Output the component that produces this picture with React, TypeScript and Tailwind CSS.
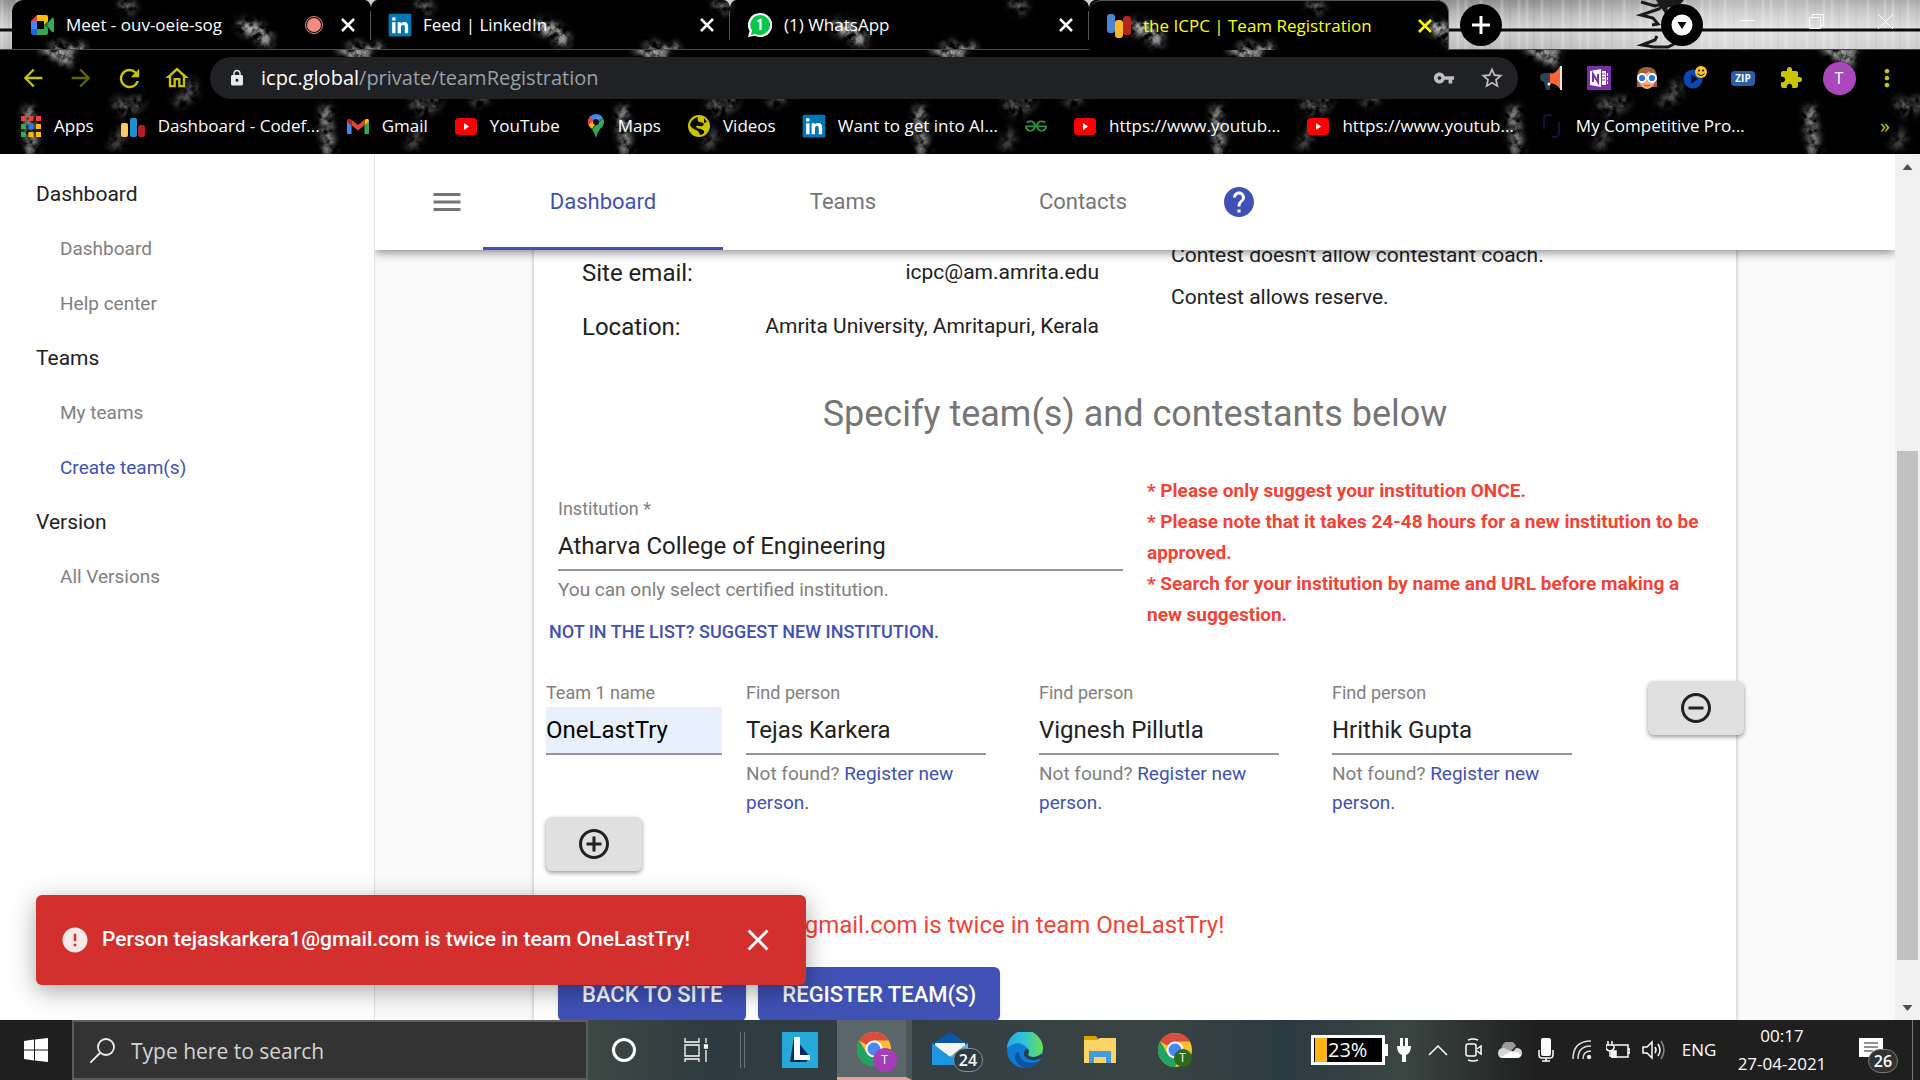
import { useState } from "react";
import type { ReactNode } from "react";
import {
  MdAddCircleOutline,
  MdArrowBack,
  MdArrowForward,
  MdClose,
  MdError,
  MdExtension,
  MdHelp,
  MdLock,
  MdMenu,
  MdMoreVert,
  MdOutlineHome,
  MdRefresh,
  MdRemoveCircleOutline,
  MdStarOutline,
  MdVpnKey,
} from "react-icons/md";
import { FaLinkedin } from "react-icons/fa";
import { SiGeeksforgeeks } from "react-icons/si";

const UI_FONT = "font-['Open_Sans','Noto_Sans',sans-serif]";

/* ---------- Brand icons ---------- */

function MeetIcon() {
  return (
    <svg viewBox="0 0 24 24" className="size-6 shrink-0">
      <path d="M1 8 7 2v6z" fill="#ea4335" />
      <path d="M1 8h6v8H1z" fill="#4285f4" />
      <path d="M1 16h6v6H3q-2 0-2-2z" fill="#1967d2" />
      <path d="M7 2h9q2 0 2 2v5l-4 3V8H7z" fill="#fbbc04" />
      <path d="M7 16h7v-4l4 3v5q0 2-2 2H7z" fill="#34a853" />
      <path d="m16 12 6-7q2-1 2 1v12q0 2-2 1z" fill="#34a853" />
      <path d="m14 12 4-4v8z" fill="#188038" />
    </svg>
  );
}

function LinkedInIcon() {
  return (
    <span className="flex size-[22px] shrink-0 items-center justify-center bg-white">
      <FaLinkedin className="size-[26px] shrink-0 text-[#0077b5]" />
    </span>
  );
}

function WhatsAppIcon() {
  return (
    <svg viewBox="0 0 24 24" className="size-6 shrink-0">
      <path d="M12 0a12 12 0 1 1-5 22.800L0 24l1.600-6A12 12 0 0 1 12 0z" fill="#fff" />
      <path d="M12 2a10 10 0 1 1-4.500 18.900L3 22l1-4.500A10 10 0 0 1 12 2z" fill="#09c64a" />
      <path d="m9.500 8.500 3-1.500v10" fill="none" stroke="#fff" strokeWidth="2.200" />
    </svg>
  );
}

function IcpcIcon() {
  return (
    <svg viewBox="0 0 24 24" className="size-6 shrink-0">
      <rect x="0" y="0" width="8" height="19" rx="3" fill="#4a86cf" />
      <rect x="8" y="6" width="8" height="18" rx="3" fill="#fdb827" />
      <rect x="16" y="2" width="8" height="19" rx="3" fill="#b3261a" />
    </svg>
  );
}

function AppsIcon() {
  const colors = ["#ea4335", "#ea4335", "#ea4335", "#34a853", "#2b7de9", "#fbbc04", "#34a853", "#fbbc04", "#fbbc04"];
  return (
    <svg viewBox="0 0 20 21" className="h-[21px] w-5 shrink-0">
      {colors.map((c, i) => (
        <rect key={i} x={(i % 3) * 7.5} y={Math.floor(i / 3) * 8} width="5" height="5" fill={c} />
      ))}
    </svg>
  );
}

function CodeforcesIcon() {
  return (
    <svg viewBox="0 0 24 24" className="size-6 shrink-0">
      <rect x="0" y="9" width="7" height="14" rx="2" fill="#f4cd5f" />
      <rect x="9" y="4" width="7" height="19" rx="2" fill="#1f8fce" />
      <rect x="17" y="11" width="7" height="12" rx="2" fill="#b61c27" />
    </svg>
  );
}

function GmailIcon() {
  return (
    <svg viewBox="0 0 24 18" className="w-[22px] shrink-0">
      <path d="M0 3v14q0 1 1 1h4V8z" fill="#4285f4" />
      <path d="M24 3v14q0 1-1 1h-4V8z" fill="#34a853" />
      <path d="M19 2v6l5-4q0-4-3-3z" fill="#fbbc04" />
      <path d="M0 4q0-4 3-3l2 1v6z" fill="#c5221f" />
      <path d="M5 8V2l7 5.500L19 2v6l-7 5.500z" fill="#ea4335" />
    </svg>
  );
}

function YouTubeIcon() {
  return (
    <svg viewBox="0 0 22 17" className="w-[22px] shrink-0">
      <rect width="22" height="17" rx="4" fill="#f00" />
      <path d="m9 5 5 3.500L9 12z" fill="#fff" />
    </svg>
  );
}

function MapsIcon() {
  return (
    <svg viewBox="0 0 16 24" className="h-6 w-[18px] shrink-0">
      <path d="M8 0a8 8 0 0 1 7 4L4 14Q0 11 0 8a8 8 0 0 1 8-8z" fill="#4285f4" />
      <path d="M2 2.500 6 6 0.500 11Q-1 6 2 2.500z" fill="#ea4335" />
      <path d="M0.500 11 11 3l-7 12q-2.500-2-3.500-4z" fill="#fbbc04" />
      <path d="M15 4q3 6-3 11-3 4-4 9-1-4-4-9z" fill="#34a853" />
      <circle cx="8" cy="8" r="3" fill="#111" />
    </svg>
  );
}

function GlobeIcon() {
  return (
    <svg viewBox="0 0 22 22" className="size-[22px] shrink-0">
      <circle cx="11" cy="11" r="11" fill="#c9c400" />
      <path
        d="M2 10Q3 4 10 2q-1 4 1 5 4 0 5 2-1 3-5 2-3-1-3 1 2 2 5 2 4 1 3 4-2 2-4 2-1-4-4-5-5-2-6-5z"
        fill="#0b0b00"
      />
      <path d="m16 3 3 4-3 1z" fill="#0b0b00" />
    </svg>
  );
}

function BracketIcon() {
  return (
    <svg viewBox="0 0 22 24" className="h-6 w-[22px] shrink-0" fill="none" stroke="#15153c" strokeWidth="2">
      <path d="M11 1H7Q3 1 3 5v10M11 23h3q4 0 4-4V8" />
    </svg>
  );
}

function ChromeIcon({ badge }: { badge: string }) {
  return (
    <span className="relative">
      <svg viewBox="0 0 34 34" className="size-[34px]">
        <circle cx="17" cy="17" r="17" fill="#fbc02d" />
        <path d="M2.300 8.500A17 17 0 0 1 31.700 8.500H17l-8 4z" fill="#dd4b3e" />
        <path d="M2.300 8.500A17 17 0 0 0 17 34l7-13-7 4-8-5z" fill="#1fa463" />
        <circle cx="17" cy="17" r="8.500" fill="#fff" />
        <circle cx="17" cy="17" r="6.500" fill="#4a87ee" />
      </svg>
      <span
        className={`absolute left-4 top-4 flex items-center justify-center rounded-full text-xs text-white ${badge}`}
      >
        T
      </span>
    </span>
  );
}

/* ---------- Browser chrome ---------- */

// Black marble tile, repeated every 297px across the window frame
function MarbleBackdrop({ id }: { id: string }) {
  return (
    <svg className="absolute inset-0 h-full w-full" aria-hidden="true">
      <defs>
        <filter
          id={`${id}-smoke`}
          filterUnits="userSpaceOnUse"
          x="0"
          y="0"
          width="297"
          height="154"
          colorInterpolationFilters="sRGB"
        >
          <feTurbulence type="fractalNoise" baseFrequency="0.12" numOctaves="5" seed="4" />
          <feColorMatrix values="0 0 0 0 1  0 0 0 0 1  0 0 0 0 1  3 0 0 0 -0.900" result="noise" />
          <feGaussianBlur in="SourceGraphic" stdDeviation="4" result="soft" />
          <feComposite in="noise" in2="soft" operator="in" />
        </filter>
        <pattern id={`${id}-marble`} width="297" height="154" patternUnits="userSpaceOnUse">
          <rect width="297" height="154" fill="#000" />
          <g filter={`url(#${id}-smoke)`} fill="none" stroke="#fff" strokeLinecap="round">
            <path d="m44 46 12 7 12 8M54 53l16-4" strokeWidth="8" opacity=".9" />
            <path d="m232 26 14 5 8 9" strokeWidth="12" opacity=".8" />
            <path d="m112 2 6 6" strokeWidth="11" opacity=".5" />
            <path d="m118 104 8 6 12-8" strokeWidth="11" opacity=".45" />
            <path d="m192 84 0 10-14 8" strokeWidth="8" opacity=".45" />
            <path d="M29 110v14l3 28" strokeWidth="9" opacity=".75" />
            <path d="m118 132 2 10-8 4" strokeWidth="7" opacity=".4" />
          </g>
        </pattern>
      </defs>
      <rect width="100%" height="100%" fill={`url(#${id}-marble)`} />
    </svg>
  );
}

function MetalBackdrop() {
  return (
    <svg className="absolute inset-x-0 top-0 h-[50px] w-full" aria-hidden="true">
      <defs>
        <linearGradient id="steel" x1="0" y1="0" x2="0" y2="1">
          <stop offset="0" stopColor="#8e8e8e" />
          <stop offset=".25" stopColor="#b4b4b4" />
          <stop offset=".55" stopColor="#d2d2d2" />
          <stop offset="1" stopColor="#bcbcbc" />
        </linearGradient>
        <pattern id="brush" width="61" height="50" patternUnits="userSpaceOnUse">
          <path d="M2 0v50M17 0v50M38 0v50M55 0v50" stroke="#fff" strokeWidth="3" opacity=".2" />
          <path d="M9 0v50M26 0v50M46 0v50" stroke="#666" strokeWidth="2" opacity=".1" />
        </pattern>
        <linearGradient id="glare">
          <stop offset="0" stopColor="#fff" stopOpacity="0" />
          <stop offset=".8" stopColor="#fff" stopOpacity="0" />
          <stop offset=".9" stopColor="#fff" stopOpacity=".4" />
          <stop offset="1" stopColor="#fff" stopOpacity=".25" />
        </linearGradient>
      </defs>
      <rect width="100%" height="50" fill="url(#steel)" />
      <rect width="100%" height="50" fill="url(#brush)" />
      <rect width="100%" height="50" fill="url(#glare)" />
      <path d="M0 30h4000" stroke="#0a0a0a" strokeWidth="3" />
      <path
        d="m1641 2 14 4 10-3-6 6-18 6 12 3 5 6-6 1M1657 36l-2 4-13 5 12 2 14 0 8-4"
        fill="none"
        stroke="#1a1a1a"
        strokeWidth="3"
      />
      <path d="m1656 0h28l-8 9-8-2-2 8z" fill="#1a1a1a" />
      <path d="M0 49.500h4000" stroke="#444" />
    </svg>
  );
}

type BrowserTabProps = {
  icon: ReactNode;
  title: string;
  active?: boolean;
  recording?: boolean;
};

function BrowserTab({ icon, title, active, recording }: BrowserTabProps) {
  return (
    <div
      className={`relative flex h-[50px] w-[359px] items-center pl-[18px] pr-4 ${
        active
          ? "rounded-t-xl border-t border-[#555] text-[#ffff00]"
          : "border-b border-[#4a4a4a] text-white"
      }`}
    >
      {icon}
      <span className="ml-3 flex-1 truncate">{title}</span>
      {recording && (
        <span className="mr-[18px] flex size-[18px] items-center justify-center rounded-full border border-[#f28b82]">
          <span className="size-[14px] rounded-full bg-[#f28b82]" />
        </span>
      )}
      <button type="button" aria-label={`Close ${title}`}>
        <svg viewBox="0 0 14 14" className="size-[14px]" stroke="currentColor" strokeWidth="2.500">
          <path d="m1 1 12 12M13 1 1 13" />
        </svg>
      </button>
      {!active && (
        <>
          <span className="absolute right-0 top-[11px] h-[29px] w-px bg-[#555]" />
          <svg viewBox="0 0 12 7" className="absolute -right-1.5 top-0 z-10 h-[7px] w-3">
            <path d="M0 0h12Q7 1 6 7 5 1 0 0z" fill="#d0d0d0" />
          </svg>
        </>
      )}
    </div>
  );
}

function TabStrip() {
  return (
    <div className="relative flex h-[50px] overflow-hidden pl-3 text-[17px]">
      <MetalBackdrop />
      <div className="relative flex overflow-hidden rounded-t-xl border-r border-[#555]">
        <MarbleBackdrop id="tabs" />
        <BrowserTab icon={<MeetIcon />} title="Meet - ouv-oeie-sog" recording />
        <BrowserTab icon={<LinkedInIcon />} title="Feed | LinkedIn" />
        <BrowserTab icon={<WhatsAppIcon />} title="(1) WhatsApp" />
        <BrowserTab icon={<IcpcIcon />} title="the ICPC | Team Registration" active />
      </div>
      <div className="relative flex flex-1 items-center pl-[11px]">
        <button type="button" aria-label="New tab" className="size-[42px] rounded-full bg-black">
          <svg viewBox="0 0 42 42" stroke="#fff" strokeWidth="3">
            <path d="M12 21h18M21 12v18" />
          </svg>
        </button>
        <button type="button" aria-label="Search tabs" className="ml-[159px] size-[42px] rounded-full bg-black">
          <svg viewBox="0 0 42 42">
            <circle cx="21" cy="21" r="10.500" fill="#fff" />
            <path d="M16.500 18h9L21 25z" fill="#000" />
          </svg>
        </button>
        <div className="ml-auto flex h-full items-start">
          <button type="button" aria-label="Minimize" className="h-[42px] w-[69px]">
            <svg viewBox="0 0 69 42" stroke="#fff">
              <path d="M27 20.500h15" />
            </svg>
          </button>
          <button type="button" aria-label="Restore" className="h-[42px] w-[69px]">
            <svg viewBox="0 0 69 42" stroke="#fff" fill="none">
              <path d="M27.500 17.500h11v11h-11zM30.500 17v-2.500h11v11H39" />
            </svg>
          </button>
          <button type="button" aria-label="Close window" className="h-[42px] w-[69px]">
            <svg viewBox="0 0 69 42" stroke="#fff">
              <path d="m27 14 15 15M42 14 27 29" />
            </svg>
          </button>
        </div>
      </div>
    </div>
  );
}

const extensions: { name: string; icon: ReactNode }[] = [
  {
    name: "Announcements",
    icon: (
      <svg viewBox="0 0 24 24" className="size-6">
        <path d="M5 7h8v9h-2v8H7l-2-8Q1 15 1 11.500T5 7z" fill="#2b4257" />
        <path d="M11 8q7-1 10-8v23q-3-5-10-6z" fill="#ff6537" />
        <path d="M22 0v24" stroke="#dfe9ef" strokeWidth="2" />
        <circle cx="10" cy="18" r="1.500" fill="#fff" />
      </svg>
    ),
  },
  {
    name: "OneNote",
    icon: (
      <svg viewBox="0 0 24 24" className="size-6">
        <path d="M0 0h24v24H0z" fill="#7b2fa5" />
        <path d="m3 5 11-2v18L3 19zM15 5h4v14h-4zM20 7h1v3h-1zM20 11h1v3h-1zM20 15h1v3h-1z" fill="#fff" />
        <path d="M6 16V8l5 8V8" fill="none" stroke="#7b2fa5" strokeWidth="2" />
        <path d="M15 8h3M15 11h3M15 14h3" stroke="#7b2fa5" />
      </svg>
    ),
  },
  {
    name: "Reader",
    icon: (
      <svg viewBox="0 0 24 24" className="size-6">
        <path d="M2 21V10Q3 1 12 1t10 9v11z" fill="#a3623e" />
        <path d="M4 9q8-1 10-4 2 4 6 4v7q-3 7-8 7t-8-7z" fill="#f2a981" />
        <circle cx="7" cy="12" r="4" fill="#1e78d5" stroke="#fff" strokeWidth="1.800" />
        <circle cx="17" cy="12" r="4" fill="#1e78d5" stroke="#fff" strokeWidth="1.800" />
        <path d="M9 19q3 2 6 0" stroke="#b33" fill="none" />
      </svg>
    ),
  },
  {
    name: "Player",
    icon: (
      <svg viewBox="0 0 24 24" className="size-6">
        <circle cx="10" cy="13" r="9.500" fill="#0d47b5" />
        <path d="m8 8 7 5-7 5z" fill="#05102e" />
        <circle cx="18" cy="6" r="6" fill="#fdc52b" />
        <circle cx="16" cy="4.500" r="1" />
        <circle cx="20" cy="4.500" r="1" />
        <path d="M14.500 7.500q3.500 4 7 0" fill="none" stroke="#000" />
      </svg>
    ),
  },
  {
    name: "Zip",
    icon: (
      <span className="flex h-[15px] w-6 items-center justify-center rounded bg-[#2762a8] text-[10px] font-bold text-white">
        ZIP
      </span>
    ),
  },
  { name: "Extensions", icon: <MdExtension className="size-6 text-[#c9c400]" /> },
];

function AddressBar() {
  return (
    <div className="relative flex h-14 items-center px-[9px]">
      <div className="flex text-[#c9c400]">
        <button type="button" aria-label="Back" className="flex w-12 justify-center">
          <MdArrowBack className="size-[28px]" />
        </button>
        <button type="button" aria-label="Forward" className="flex w-12 justify-center opacity-50">
          <MdArrowForward className="size-[28px]" />
        </button>
        <button type="button" aria-label="Reload" className="flex w-12 justify-center">
          <MdRefresh className="size-[29px]" />
        </button>
        <button type="button" aria-label="Home" className="flex w-12 justify-center">
          <MdOutlineHome className="size-7" />
        </button>
      </div>
      <div className="ml-[9px] flex h-[42px] flex-1 items-center rounded-full bg-[#202124] px-[18px] text-xl">
        <MdLock className="size-[18px] text-[#e8eaed]" />
        <p className="ml-[15px] flex-1 text-white">
          icpc.global<span className="text-[#9aa0a6]">/private/teamRegistration</span>
        </p>
        <button type="button" aria-label="Saved passwords" className="flex w-12 justify-center text-[#bdbdbd]">
          <MdVpnKey className="size-[22px]" />
        </button>
        <button type="button" aria-label="Bookmark this page" className="-mr-4 flex w-12 justify-center text-[#bdbdbd]">
          <MdStarOutline className="size-[26px]" />
        </button>
      </div>
      <div className="ml-[9px] flex items-center">
        {extensions.map((ext) => (
          <button key={ext.name} type="button" aria-label={ext.name} className="flex w-12 justify-center">
            {ext.icon}
          </button>
        ))}
        <button type="button" aria-label="Profile" className="flex w-12 justify-center">
          <span className="flex size-[33px] items-center justify-center rounded-full bg-[#ab47bc] text-base text-white">
            T
          </span>
        </button>
        <button type="button" aria-label="Menu" className="flex w-12 justify-center text-[#c9c400]">
          <MdMoreVert className="size-7" />
        </button>
      </div>
    </div>
  );
}

const bookmarks: { label: string; icon: ReactNode }[] = [
  { label: "Apps", icon: <AppsIcon /> },
  { label: "Dashboard - Codef...", icon: <CodeforcesIcon /> },
  { label: "Gmail", icon: <GmailIcon /> },
  { label: "YouTube", icon: <YouTubeIcon /> },
  { label: "Maps", icon: <MapsIcon /> },
  { label: "Videos", icon: <GlobeIcon /> },
  { label: "Want to get into AI...", icon: <LinkedInIcon /> },
  { label: "", icon: <SiGeeksforgeeks className="size-[22px] text-[#2f8d46]" title="GeeksforGeeks" /> },
  { label: "https://www.youtub...", icon: <YouTubeIcon /> },
  { label: "https://www.youtub...", icon: <YouTubeIcon /> },
  { label: "My Competitive Pro...", icon: <BracketIcon /> },
];

function BookmarksBar() {
  return (
    <nav className="relative flex h-12 items-center gap-[27px] whitespace-nowrap pb-2 pl-[21px] pr-[30px] text-[17px] text-white">
      {bookmarks.map((b, i) => (
        <a key={i} href="#" className="flex shrink-0 items-center gap-[13px]">
          {b.icon}
          {b.label && <span>{b.label}</span>}
        </a>
      ))}
      <button type="button" aria-label="More bookmarks" className="ml-auto text-xl text-[#c9c400]">
        »
      </button>
    </nav>
  );
}

/* ---------- ICPC site ---------- */

const menu = [
  { title: "Dashboard", items: ["Dashboard", "Help center"] },
  { title: "Teams", items: ["My teams", "Create team(s)"] },
  { title: "Version", items: ["All Versions"] },
];

function Sidebar() {
  return (
    <aside className="w-[375px] shrink-0 border-r border-[#e0e0e0] bg-white pt-[13px]">
      {menu.map((section) => (
        <section key={section.title}>
          <h2 className="pl-9 text-[21px] leading-[54px] text-[#212121]">{section.title}</h2>
          {section.items.map((item) => (
            <a
              key={item}
              href="#"
              className={`block pl-[60px] text-[19px] leading-[55px] ${
                item === "Create team(s)" ? "text-[#3f51b5]" : "text-[#808080]"
              }`}
            >
              {item}
            </a>
          ))}
        </section>
      ))}
    </aside>
  );
}

function SiteHeader() {
  const tabs = ["Dashboard", "Teams", "Contacts"];
  return (
    <header className="relative z-10 flex h-24 shrink-0 items-center bg-white pl-9 shadow-[0_2px_10px_rgba(0,0,0,0.5)]">
      <button type="button" aria-label="Toggle menu" className="flex w-[72px] justify-center text-[#757575]">
        <MdMenu className="size-9" />
      </button>
      <nav className="flex h-full">
        {tabs.map((tab) => (
          <a
            key={tab}
            href="#"
            className={`flex w-60 items-center justify-center border-b-[3px] pt-0.5 text-[22px] ${
              tab === "Dashboard" ? "border-[#3f51b5] text-[#3f51b5]" : "border-transparent text-[#757575]"
            }`}
          >
            {tab}
          </a>
        ))}
      </nav>
      <button type="button" aria-label="Help" className="flex w-[72px] justify-center text-[#3f51b5]">
        <MdHelp className="size-9" />
      </button>
    </header>
  );
}

type FieldProps = {
  id: string;
  label: string;
  value: string;
  filled?: boolean;
  children?: ReactNode;
};

function Field({ id, label, value, filled, children }: FieldProps) {
  const [text, setText] = useState(value);
  return (
    <div className="text-[#808080]">
      <label htmlFor={id} className="block pb-0.5 text-lg leading-6">
        {label}
      </label>
      <input
        id={id}
        value={text}
        onChange={(e) => setText(e.target.value)}
        className={`block h-12 w-full border-b-2 border-[#949494] text-2xl outline-none ${
          filled ? "bg-[#e8f0fe] text-black" : "text-[#212121]"
        }`}
      />
      {children && <p className="mt-1 text-[19px] leading-[29px]">{children}</p>}
    </div>
  );
}

function RegistrationForm() {
  const people = ["Tejas Karkera", "Vignesh Pillutla", "Hrithik Gupta"];
  return (
    <main className="mx-[159px] -mt-4 flex-1 bg-white shadow-[0_0_4px_rgba(0,0,0,0.3)]">
      <div className="grid grid-cols-2 gap-6 px-6 text-[#212121]">
        <dl className="px-6 pt-3">
          <div className="flex h-[54px] items-center justify-between">
            <dt className="text-2xl">Site email:</dt>
            <dd className="text-[21px]">icpc@am.amrita.edu</dd>
          </div>
          <div className="flex h-[54px] items-center justify-between">
            <dt className="text-2xl">Location:</dt>
            <dd className="text-[21px]">Amrita University, Amritapuri, Kerala</dd>
          </div>
        </dl>
        <div className="px-6 text-[21px] leading-[42px]">
          <p>Contest doesn't allow contestant coach.</p>
          <p>Contest allows reserve.</p>
        </div>
      </div>

      <h1 className="mt-9 text-center text-4xl leading-[48px] text-[#757575]">
        Specify team(s) and contestants below
      </h1>

      <div className="mt-[37px] grid grid-cols-2 gap-6 px-6">
        <div className="pt-[22px]">
          <Field id="institution" label="Institution *" value="Atharva College of Engineering">
            You can only select certified institution.
          </Field>
          <button type="button" className="-ml-[9px] mt-2.5 block h-9 text-lg font-medium text-[#3f51b5]">
            NOT IN THE LIST? SUGGEST NEW INSTITUTION.
          </button>
        </div>
        <div className="text-[19px] font-bold leading-[31px] text-[#f44336]">
          <p>* Please only suggest your institution ONCE.</p>
          <p>* Please note that it takes 24-48 hours for a new institution to be approved.</p>
          <p>* Search for your institution by name and URL before making a new suggestion.</p>
        </div>
      </div>

      <div className="mt-[31px] flex pl-3">
        <div className="w-44 shrink-0">
          <Field id="team-1" label="Team 1 name" value="OneLastTry" filled />
        </div>
        <div className="ml-6 flex gap-[53px]">
          {people.map((name, i) => (
            <div key={name} className="w-60 shrink-0">
              <Field id={`person-${i}`} label="Find person" value={name}>
                Not found?{" "}
                <a href="#" className="text-[#3f51b5]">
                  Register new person.
                </a>
              </Field>
            </div>
          ))}
        </div>
        <button
          type="button"
          aria-label="Remove team"
          className="ml-[76px] flex h-[54px] w-24 shrink-0 items-center justify-center rounded-md bg-[#e0e0e0] text-[#212121] shadow-[0_2px_4px_rgba(0,0,0,0.4)]"
        >
          <MdRemoveCircleOutline className="size-9" />
        </button>
      </div>
      <button
        type="button"
        aria-label="Add team"
        className="ml-3 flex h-[54px] w-24 items-center justify-center rounded-md bg-[#e0e0e0] text-[#212121] shadow-[0_2px_4px_rgba(0,0,0,0.4)]"
      >
        <MdAddCircleOutline className="size-9" />
      </button>

      <p className="mt-[38px] px-6 text-2xl leading-8 text-[#f44336]">
        Person tejaskarkera1@gmail.com is twice in team OneLastTry!
      </p>
      <div className="mt-[26px] flex gap-3 px-6 text-[22px] font-medium text-white">
        <button type="button" className="h-[54px] rounded-md bg-[#3f51b5] px-6 shadow-md">
          BACK TO SITE
        </button>
        <button type="button" className="h-[54px] rounded-md bg-[#3f51b5] px-6 shadow-md">
          REGISTER TEAM(S)
        </button>
      </div>
    </main>
  );
}

function Scrollbar() {
  return (
    <div className="flex w-[25px] shrink-0 flex-col items-center bg-[#f1f1f1]" aria-hidden="true">
      <svg viewBox="0 0 25 25" className="size-[25px]">
        <path d="m12.500 10 5 6h-10z" fill="#505050" />
      </svg>
      <div className="flex w-[21px] flex-1 flex-col">
        <div className="grow-[272]" />
        <div className="grow-[509] bg-[#c1c1c1]" />
        <div className="grow-[35]" />
      </div>
      <svg viewBox="0 0 25 25" className="size-[25px]">
        <path d="m7.500 10 5 6 5-6z" fill="#505050" />
      </svg>
    </div>
  );
}

function Toast() {
  return (
    <div
      role="alert"
      className="absolute bottom-[35px] left-9 z-20 flex h-[90px] w-[770px] items-center rounded-md bg-[#d32f2f] pl-6 pr-[30px] text-[21px] font-medium text-white shadow-[0_6px_24px_rgba(0,0,0,0.35)]"
    >
      <MdError className="size-[30px] text-[#fbe9e9]" />
      <span className="ml-3 flex-1">Person tejaskarkera1@gmail.com is twice in team OneLastTry!</span>
      <button type="button" aria-label="Dismiss">
        <MdClose className="size-9" />
      </button>
    </div>
  );
}

/* ---------- Taskbar ---------- */

function TrayCell({ children }: { children: ReactNode }) {
  return <span className="flex w-9 justify-center">{children}</span>;
}

function SystemTray() {
  return (
    <div className="ml-auto flex h-full items-center">
      <div className="flex items-center">
        <div className="flex h-[30px] w-[74px] items-center border-[3px] border-white bg-black text-xl">
          <span className="ml-px h-6 w-3 shrink-0 bg-[#fdb515]" />
          <span className="ml-px">23%</span>
        </div>
        <span className="h-3 w-[3px] bg-white" />
      </div>
      <span className="flex w-8 justify-center">
        <svg viewBox="0 0 14 24" className="h-6 w-[14px]" fill="#fff">
          <path d="M3 0h3v8h2V0h3v8h3q0 7-5 9v7H5v-7Q0 15 0 8h3z" />
        </svg>
      </span>
      <TrayCell>
        <svg viewBox="0 0 20 12" className="w-5" fill="none" stroke="#fff" strokeWidth="1.500">
          <path d="m1 11 9-9 9 9" />
        </svg>
      </TrayCell>
      <TrayCell>
        <svg viewBox="0 0 18 24" className="w-[18px]" fill="none" stroke="#fff" strokeWidth="1.500">
          <rect x="1" y="6" width="10" height="12" rx="2" />
          <path d="m12 11 4-3v8l-4-3M3 2q5-2 10 0M3 22q5 2 10 0" />
        </svg>
      </TrayCell>
      <TrayCell>
        <svg viewBox="0 0 24 16" className="w-6">
          <path d="M4 9a6 6 0 0 1 14-5l-9 9z" fill="#9a9a9a" />
          <path d="M0 11q0-5 6-5l9 4 3-4q6 0 6 5 0 4-4 5H4q-4 0-4-5z" fill="#d5d5d5" />
          <path d="M3 15 14 9q6 1 9 4-1 3-4 3H5z" fill="#fff" />
        </svg>
      </TrayCell>
      <TrayCell>
        <svg viewBox="0 0 16 24" className="h-6 w-4">
          <rect x="3" y="0" width="10" height="18" rx="2" fill="#fff" />
          <path d="M1 12v5q0 3 3 3h8q3 0 3-3v-5M8 20v3M4 23h8" fill="none" stroke="#fff" strokeWidth="1.500" />
        </svg>
      </TrayCell>
      <TrayCell>
        <svg viewBox="0 0 20 20" className="size-5" fill="none" stroke="#ddd" strokeWidth="1.500">
          <path d="M1 19Q1 1 19 1M6 19Q6 6 19 6M11 19q0-8 8-8" />
          <circle cx="17" cy="17" r="1.500" fill="#fff" />
        </svg>
      </TrayCell>
      <TrayCell>
        <svg viewBox="0 0 24 18" className="w-6" fill="none" stroke="#fff" strokeWidth="1.500">
          <path d="M9 4h13v12H6v-5M22 8h2v4h-2M2 0v4M6 0v4M0 4h8v3q-1 3-4 3t-4-3zM4 10v5h3" />
          <path d="M6 10h4v6H6z" fill="#fff" />
        </svg>
      </TrayCell>
      <TrayCell>
        <svg viewBox="0 0 24 20" className="w-6" fill="none" stroke="#fff" strokeWidth="1.500">
          <path d="M1 7h4l5-5v16l-5-5H1zM13 7q2 3 0 6M16 4q4 6 0 12" />
          <path d="M19 1q6 9 0 18" stroke="#888" />
        </svg>
      </TrayCell>
      <span className="w-[54px] text-center text-[17px]">ENG</span>
      <div className="w-[112px] text-center text-[17px] leading-7">
        <div>00:17</div>
        <div>27-04-2021</div>
      </div>
      <button type="button" aria-label="Notifications" className="relative flex w-[70px] justify-center">
        <svg viewBox="0 0 24 24" className="-ml-1 size-6">
          <path d="M0 0h24v19h-8v5l-6-5H0z" fill="#fff" />
          <path d="M5 5h14M5 9h14M5 13h9" stroke="#222" />
        </svg>
        <span className="absolute left-[30px] top-[11px] flex h-6 w-[30px] items-center justify-center rounded-full border border-[#777] bg-[#333] text-base font-semibold">
          26
        </span>
      </button>
      <span className="ml-1 mr-[7px] h-full w-px bg-[#777]" />
    </div>
  );
}

function Taskbar() {
  return (
    <footer
      className={`flex h-[60px] shrink-0 items-center bg-[linear-gradient(90deg,#1f1f1f_0%,#1f1f1f_4%,#3d4744_31%,#2d3a41_37%,#333f43_48%,#3a4444_60%,#2b3a42_67%,#3b4643_73%,#1f1f1f_80%)] text-white ${UI_FONT}`}
    >
      <button type="button" aria-label="Start" className="flex w-[72px] justify-center">
        <svg viewBox="0 0 24 24" className="size-6" fill="#fff">
          <path d="m0 3 10-1.400V11.400H0zM11 1.500 24 0v11.400H11zM0 12.600h10v9.800L0 21zM11 12.600h13V24l-13-1.600z" />
        </svg>
      </button>
      <label className="flex h-full w-[516px] items-center border-2 border-[#5d5d5d] bg-[#333] pl-4">
        <svg viewBox="0 0 25 25" className="size-[25px] shrink-0" fill="none" stroke="#eee" strokeWidth="1.800">
          <circle cx="16" cy="9" r="8" />
          <path d="M10 15 0 25" />
        </svg>
        <input
          aria-label="Search"
          placeholder="Type here to search"
          className="ml-4 w-full bg-transparent pt-1 text-[21px] outline-none placeholder:text-[#d4d4d4]"
        />
      </label>
      <button type="button" aria-label="Cortana" className="flex w-[72px] justify-center">
        <span className="size-6 rounded-full border-[3px] border-white" />
      </button>
      <button type="button" aria-label="Task view" className="flex w-[72px] justify-center">
        <svg viewBox="0 0 24 24" className="size-6" fill="none" stroke="#fff" strokeWidth="1.300">
          <path d="M1 0v4h14V0M1 7h14v11H1zM1 24v-3h14v3M22 0v5M22 12v12" />
          <path d="M20.500 7h3v3h-3z" fill="#fff" />
        </svg>
      </button>
      <span className="ml-2 mr-[17px] h-9 w-[5px] border-x border-[#6b7376]" />
      <button type="button" aria-label="Lightshot" className="flex w-[75px] justify-center">
        <svg viewBox="0 0 36 36" className="size-9">
          <path d="M0 0h36v36H0z" fill="#24a9d8" />
          <path d="m12 5-4 25h16l4-5z" fill="#072a5e" />
          <path d="M12 5h6v18h10v5H12z" fill="#fff" />
        </svg>
      </button>
      <button
        type="button"
        aria-label="Chrome, running"
        className="flex h-full w-[75px] items-center justify-center border-b-[3px] border-r-[6px] border-b-[#f89a9d] border-r-[#4a5659] bg-[#5a6669] pl-1"
      >
        <ChromeIcon badge="size-6 bg-[#a63db8]" />
      </button>
      <button type="button" aria-label="Mail" className="relative flex w-[75px] justify-center">
        <svg viewBox="0 0 36 36" className="size-9">
          <path d="M0 12 18 0l18 12v4H0z" fill="#0a56a8" />
          <path d="M3 11h30v3L18 25 3 14z" fill="#f4f4f4" />
          <path d="m0 11 18 14 18-14v22H0z" fill="#1f96e4" />
          <path d="m18 25 18-14v12z" fill="#43c4f0" />
        </svg>
        <span className="absolute left-[41px] top-4 flex h-6 w-[30px] items-center justify-center rounded-full border border-[#8a9193] bg-[#2f3b40] text-base font-semibold">
          24
        </span>
      </button>
      <button type="button" aria-label="Edge" className="flex w-[75px] justify-center">
        <svg viewBox="0 0 36 36" className="size-9">
          <defs>
            <linearGradient id="edge-top">
              <stop offset="0" stopColor="#2aa7e8" />
              <stop offset=".5" stopColor="#30c6d2" />
              <stop offset="1" stopColor="#6be04c" />
            </linearGradient>
          </defs>
          <circle cx="18" cy="18" r="18" fill="#0f7bd6" />
          <path d="M0 16A18 18 0 0 1 36 17q-1 8-10 8-5 0-5-3 2-2 0-5Q12 6 0 16z" fill="url(#edge-top)" />
          <path d="M12 20q0 10 12 11 6 0 9-3-5 8-15 8-8-2-10-10 0-6 4-6z" fill="#11539c" />
          <path d="M21 17q-5 1-4 6 3 6 12 5l5-2 2-2-2-2q-3 3-8 3-5 0-5-3 2-2 0-5z" fill="#2d3a41" />
        </svg>
      </button>
      <button type="button" aria-label="File Explorer" className="flex w-[75px] justify-center">
        <svg viewBox="0 0 32 28" className="w-8">
          <path d="M0 0h12l3 4H0z" fill="#e0a000" />
          <path d="M0 4h13l3-2h16v25H0z" fill="#fcd367" />
          <path d="M5 27V15h22v12h-5v-6H10v6z" fill="#3f9ce0" />
        </svg>
      </button>
      <button type="button" aria-label="Chrome" className="flex w-[75px] justify-center">
        <ChromeIcon badge="size-[18px] bg-[#2f6a1e]" />
      </button>
      <SystemTray />
    </footer>
  );
}

export default function App() {
  return (
    <div className="flex h-screen flex-col overflow-hidden">
      {/* Browser window */}
      <div className={`relative shrink-0 bg-black ${UI_FONT}`}>
        <MarbleBackdrop id="frame" />
        <TabStrip />
        <AddressBar />
        <BookmarksBar />
      </div>

      {/* Page */}
      <div className="relative flex min-h-0 flex-1 font-['Roboto',sans-serif]">
        <Sidebar />
        <div className="flex min-w-0 flex-1 flex-col overflow-hidden bg-[#fafafa]">
          <SiteHeader />
          <RegistrationForm />
        </div>
        <Scrollbar />
        <Toast />
      </div>

      <Taskbar />
    </div>
  );
}
